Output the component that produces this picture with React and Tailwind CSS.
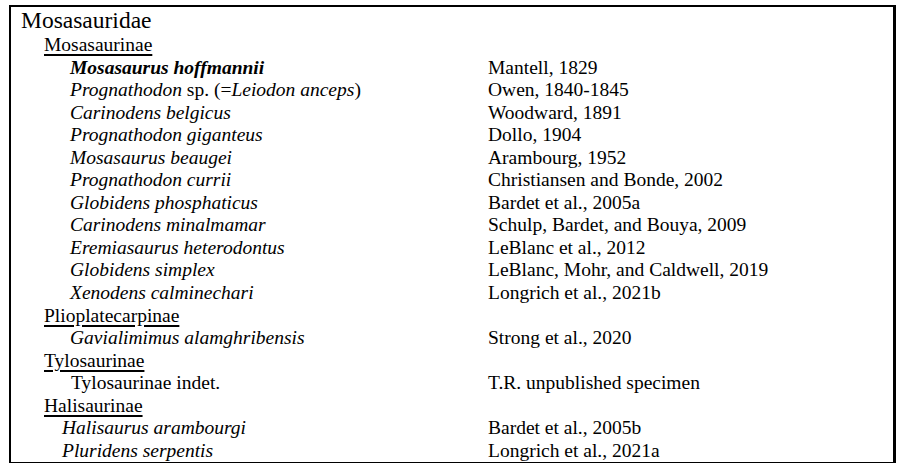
const groups = [
  {
    name: 'Mosasaurinae',
    indent: 'pl-[59px]',
    taxa: [
      { name: <b className="font-bold">Mosasaurus hoffmannii</b>, author: 'Mantell, 1829' },
      {
        name: (
          <>
            Prognathodon<span className="not-italic"> sp. (=</span>Leiodon anceps<span className="not-italic">)</span>
          </>
        ),
        author: 'Owen, 1840-1845',
      },
      { name: 'Carinodens belgicus', author: 'Woodward, 1891' },
      { name: 'Prognathodon giganteus', author: 'Dollo, 1904' },
      { name: 'Mosasaurus beaugei', author: 'Arambourg, 1952' },
      { name: 'Prognathodon currii', author: 'Christiansen and Bonde, 2002' },
      { name: 'Globidens phosphaticus', author: 'Bardet et al., 2005a' },
      { name: 'Carinodens minalmamar', author: 'Schulp, Bardet, and Bouya, 2009' },
      { name: 'Eremiasaurus heterodontus', author: 'LeBlanc et al., 2012' },
      { name: 'Globidens simplex', author: 'LeBlanc, Mohr, and Caldwell, 2019' },
      { name: 'Xenodens calminechari', author: 'Longrich et al., 2021b' },
    ],
  },
  {
    name: 'Plioplatecarpinae',
    indent: 'pl-[59px]',
    taxa: [{ name: 'Gavialimimus alamghribensis', author: 'Strong et al., 2020' }],
  },
  {
    name: 'Tylosaurinae',
    indent: 'pl-[60px]',
    taxa: [{ name: <span className="not-italic">Tylosaurinae indet.</span>, author: 'T.R. unpublished specimen' }],
  },
  {
    name: 'Halisaurinae',
    indent: 'pl-[51px]',
    taxa: [
      { name: 'Halisaurus arambourgi', author: 'Bardet et al., 2005b' },
      { name: 'Pluridens serpentis', author: 'Longrich et al., 2021a' },
    ],
  },
];

export default function App() {
  return (
    <div className="w-[902px] h-[471px] bg-white pt-[5px] pl-[9px] overflow-hidden font-['Liberation_Serif','Times_New_Roman',serif]">
      <div className="w-[887px] h-[458px] border-t-2 border-l-2 border-r-[3px] border-b border-black text-black overflow-hidden">
        <div className="pl-[10px] text-[23.5px] leading-[27px]">Mosasauridae</div>
        {groups.map(group => (
          <div key={group.name} className="text-[19.5px] leading-[22.55px]">
            <div className="pl-[33px]">
              <span className="underline decoration-[1.5px] underline-offset-[3px]">{group.name}</span>
            </div>
            {group.taxa.map(taxon => (
              <div key={taxon.author} className="flex">
                <div className={`w-[477px] shrink-0 italic ${group.indent}`}>{taxon.name}</div>
                <div className="whitespace-nowrap">{taxon.author}</div>
              </div>
            ))}
          </div>
        ))}
      </div>
    </div>
  );
}
